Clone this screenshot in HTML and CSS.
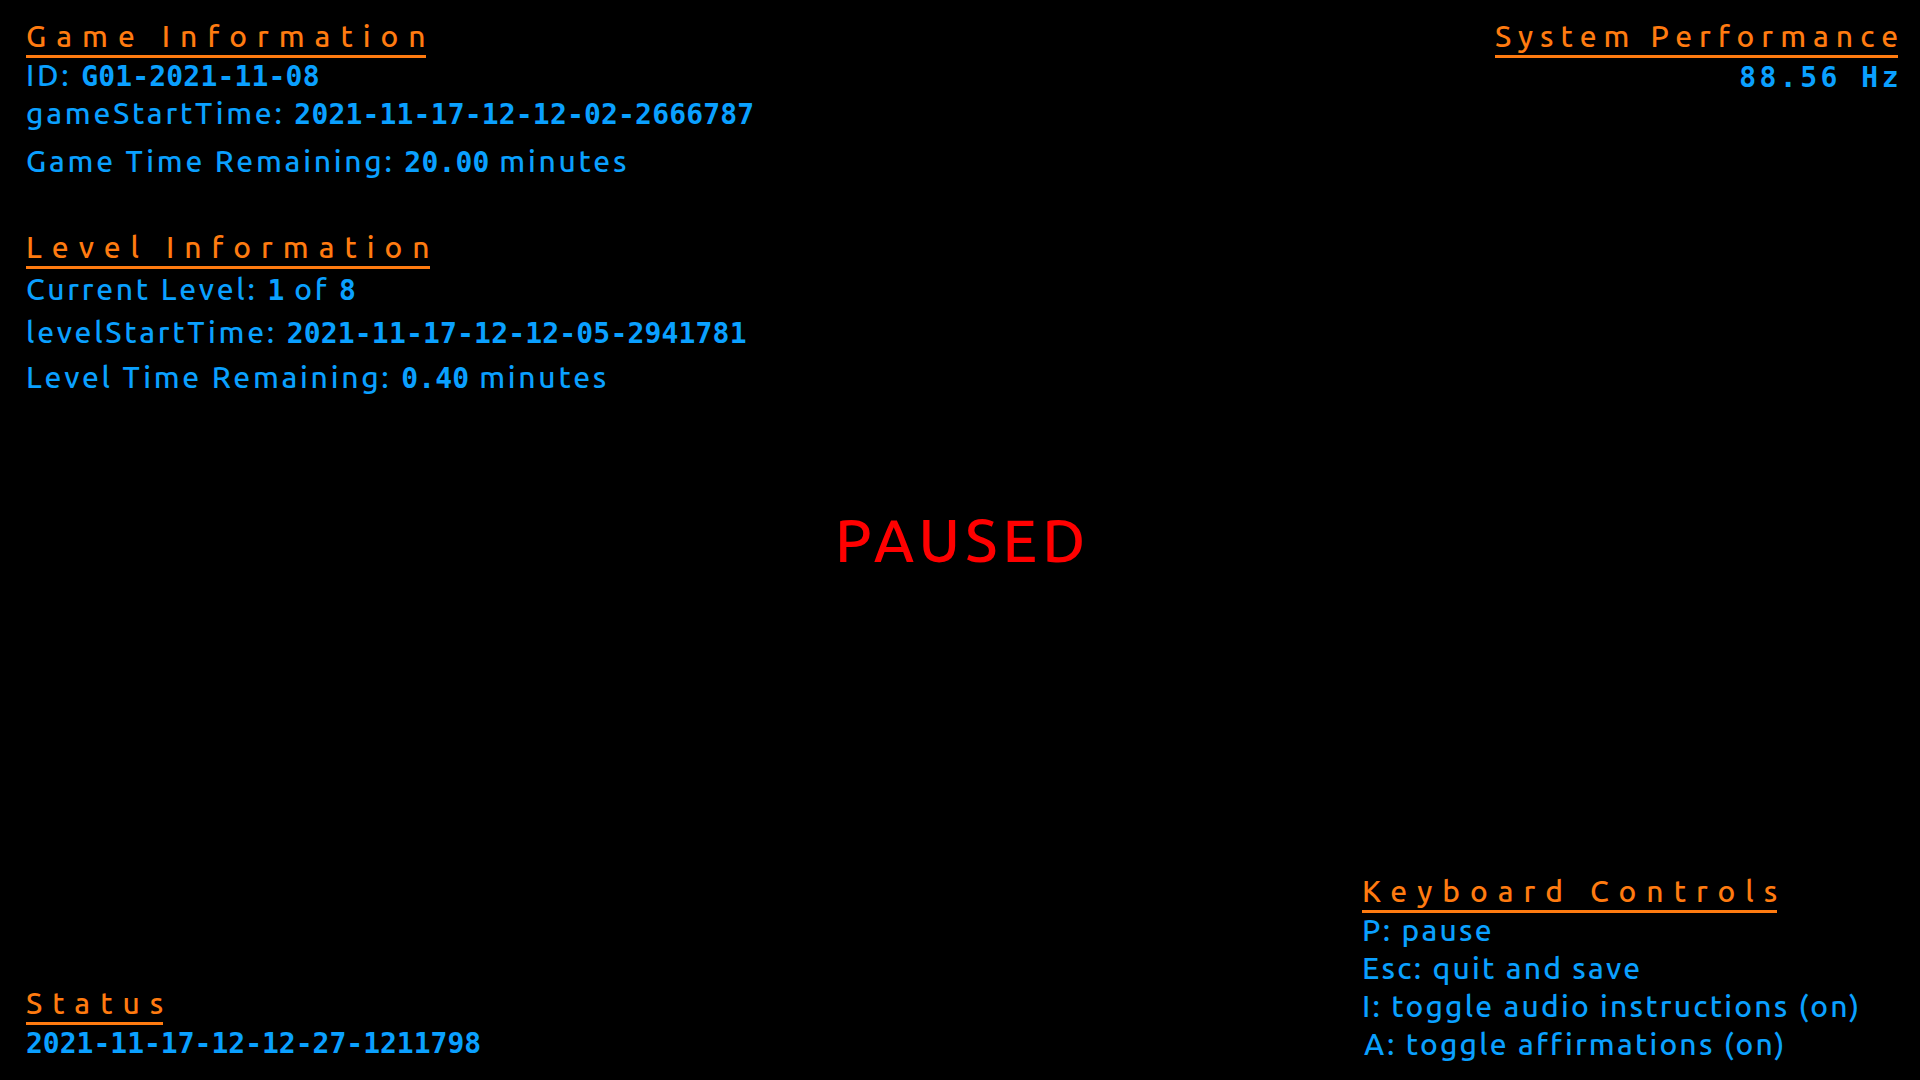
FILE: index.html
```html
<!DOCTYPE html>
<html lang="en">
<head>
<meta charset="utf-8">
<title>Game HUD - Paused</title>
<link rel="stylesheet" href="styles.css">
</head>
<body>
<div class="screen">
  <div class="top">
    <section class="panel info">
      <h2 class="heading"><span class="heading-text">Game Information</span></h2>
      <p class="line">ID: <span class="num">G01-2021-11-08</span></p>
      <p class="line">gameStartTime: <span class="num">2021-11-17-12-12-02-2666787</span></p>
      <p class="line gap-10">Game Time Remaining: <span class="num">20.00</span> minutes</p>

      <h2 class="heading section-gap"><span class="heading-text">Level Information</span></h2>
      <p class="line gap-3">Current Level: <span class="num">1</span> of <span class="num">8</span></p>
      <p class="line gap-5">levelStartTime: <span class="num">2021-11-17-12-12-05-2941781</span></p>
      <p class="line gap-7">Level Time Remaining: <span class="num">0.40</span> minutes</p>
    </section>

    <section class="panel panel-right">
      <h2 class="heading heading-tight"><span class="heading-text">System Performance</span></h2>
      <p class="rate">88.56 Hz</p>
    </section>
  </div>

  <div class="bottom">
    <section class="panel status">
      <h2 class="heading"><span class="heading-text">Status</span></h2>
      <p class="line status-value"><span class="num">2021-11-17-12-12-27-1211798</span></p>
    </section>

    <section class="panel controls">
      <h2 class="heading"><span class="heading-text">Keyboard Controls</span></h2>
      <p class="line">P: pause</p>
      <p class="line">Esc: quit and save</p>
      <p class="line">I: toggle audio instructions (on)</p>
      <p class="line indent">A: toggle affirmations (on)</p>
    </section>
  </div>

  <div class="paused">PAUSED</div>
</div>
</body>
</html>
```

FILE: styles.css
```css
html, body {
  margin: 0;
  padding: 0;
  background: #000;
}

body {
  font-family: "Ubuntu", "DejaVu Sans Condensed", "DejaVu Sans", sans-serif;
  color: #0aa0ff;
}

.screen {
  position: relative;
  width: 1920px;
  height: 1080px;
  box-sizing: border-box;
  padding: 16px 15px 17px 26px;
  display: flex;
  flex-direction: column;
  justify-content: space-between;
  overflow: hidden;
}

.top {
  display: flex;
  justify-content: space-between;
  align-items: flex-start;
}

.bottom {
  display: grid;
  grid-template-columns: 1336px 1fr;
  align-items: end;
}

.panel {
  display: flex;
  flex-direction: column;
  align-items: flex-start;
}

.panel-right {
  align-items: flex-end;
  text-align: right;
}

/* Headings */
.heading {
  --ls: 10px;
  margin: 0;
  font-size: 30px;
  font-weight: 500;
  line-height: 40px;
  letter-spacing: var(--ls);
  color: #ff7b10;
  white-space: nowrap;
}

.heading-tight {
  --ls: 7px;
}

.heading-text {
  position: relative;
  display: inline-block;
}

.heading-text::after {
  content: "";
  position: absolute;
  left: 0;
  right: var(--ls);
  top: 39px;
  height: 3px;
  background: currentColor;
}

.section-gap {
  margin-top: 47px;
}

/* Body lines */
.line {
  margin: 0;
  font-size: 30px;
  font-weight: 500;
  line-height: 38px;
  letter-spacing: 2.4px;
  white-space: nowrap;
}

.info .line {
  letter-spacing: 2.75px;
}

.controls .line {
  letter-spacing: 2.2px;
}

.num {
  font-family: "DejaVu Sans Mono", "Liberation Mono", monospace;
  font-weight: bold;
  font-size: 28px;
  line-height: 1;
}

.info .num {
  letter-spacing: 0.18px;
}

.status .num {
  letter-spacing: 0;
}

.gap-3 { margin-top: 3px; }
.gap-5 { margin-top: 5px; }
.gap-7 { margin-top: 7px; }
.gap-10 { margin-top: 10px; }

.indent {
  padding-left: 2px;
}

.rate {
  margin: 2px 3px 0 0;
  font-family: "DejaVu Sans Mono", "Liberation Mono", monospace;
  font-weight: bold;
  font-size: 28px;
  line-height: 40px;
  letter-spacing: 3.5px;
}

.status-value {
  margin-bottom: 2px;
}

/* Overlay message */
.paused {
  position: absolute;
  left: 50%;
  top: 50%;
  transform: translate(-50%, -50%);
  padding-left: 5px;
  font-size: 60px;
  font-weight: 500;
  line-height: 60px;
  letter-spacing: 5px;
  color: #ff0000;
  white-space: nowrap;
}
```
